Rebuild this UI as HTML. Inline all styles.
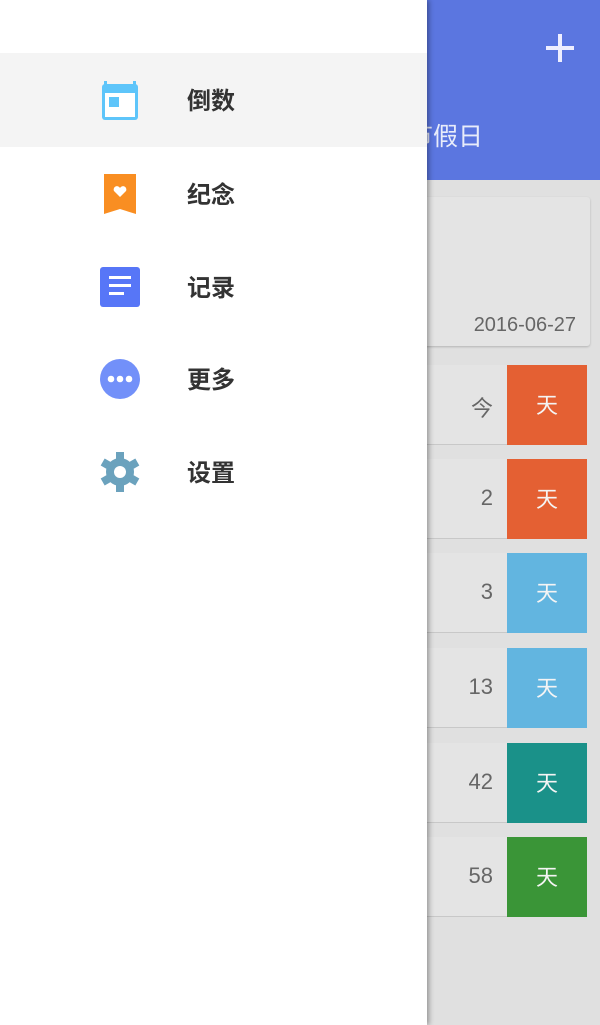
<!DOCTYPE html>
<html><head><meta charset="utf-8"><style>
*{margin:0;padding:0;box-sizing:border-box}
body{width:600px;height:1025px;overflow:hidden;position:relative;background:#e0e0e0;font-family:"Liberation Sans","Noto Sans CJK SC",sans-serif}
.hdr{position:absolute;left:0;top:0;width:600px;height:180px;background:#5b76e0}
.plus{position:absolute;left:546px;top:34px;width:28px;height:28px}
.plus:before{content:"";position:absolute;left:12px;top:0;width:4px;height:28px;background:#eef}
.plus:after{content:"";position:absolute;left:0;top:12px;width:28px;height:4px;background:#eef}
.htitle{position:absolute;left:408px;top:117px;color:#e8ecfa;font-size:25px}
.card{position:absolute;left:380px;top:197px;width:210px;height:149px;background:#e4e4e4;border-radius:3px;box-shadow:0 1px 2px rgba(0,0,0,.2)}
.card span{position:absolute;right:14px;bottom:9px;font-size:20px;color:#666}
.row{position:absolute;left:380px;width:207px;height:80px;background:#e4e4e4;border-bottom:1px solid #c8c8c8}
.row .n{position:absolute;right:94px;top:26px;font-size:22px;color:#666}
.row .b{position:absolute;right:0;top:0;width:80px;height:80px;color:#f4f4f4;font-size:22px;text-align:center;line-height:82px}
.drawer{position:absolute;left:0;top:0;width:427px;height:1025px;background:#fff;box-shadow:2px 0 5px rgba(0,0,0,.35)}
.item{position:absolute;left:0;width:427px;height:94px}
.item.sel{background:#f4f4f4}
.item svg{position:absolute;left:100px;top:27px;width:40px;height:40px}
.item span{position:absolute;left:187px;top:28px;font-size:24px;color:#333;font-weight:bold}
</style></head><body>
<div class="hdr"><div class="plus"></div><div class="htitle">节假日</div></div>
<div class="card"><span>2016-06-27</span></div>
<div class="row" style="top:365px"><div class="n">今</div><div class="b" style="background:#e46033">天</div></div>
<div class="row" style="top:459px"><div class="n">2</div><div class="b" style="background:#e46033">天</div></div>
<div class="row" style="top:553px"><div class="n">3</div><div class="b" style="background:#62b5e0">天</div></div>
<div class="row" style="top:648px"><div class="n">13</div><div class="b" style="background:#62b5e0">天</div></div>
<div class="row" style="top:743px"><div class="n">42</div><div class="b" style="background:#1a9189">天</div></div>
<div class="row" style="top:837px"><div class="n">58</div><div class="b" style="background:#3a9537">天</div></div>
<div class="drawer">
<div class="item sel" style="top:53px"><svg viewBox="0 0 40 40"><rect x="2" y="4" width="36" height="36" rx="3" fill="#5ec5fa"/><rect x="4" y="1" width="3" height="6" fill="#5ec5fa"/><rect x="33" y="1" width="3" height="6" fill="#5ec5fa"/><rect x="5" y="13" width="30" height="24" fill="#fff"/><rect x="9" y="17" width="10" height="10" fill="#5ec5fa"/></svg><span>倒数</span></div>
<div class="item" style="top:147px"><svg viewBox="0 0 40 40"><path d="M4 0h32v40l-16-5-16 5z" fill="#f98e22"/><path d="M20 23l-6-6a3.3 3.3 0 0 1 6-3a3.3 3.3 0 0 1 6 3z" fill="#fff"/></svg><span>纪念</span></div>
<div class="item" style="top:240px"><svg viewBox="0 0 40 40"><rect x="0" y="0" width="40" height="40" rx="3" fill="#5776f7"/><rect x="9" y="9" width="22" height="3" fill="#fff"/><rect x="9" y="17" width="22" height="3" fill="#fff"/><rect x="9" y="25" width="15" height="3" fill="#fff"/></svg><span>记录</span></div>
<div class="item" style="top:332px"><svg viewBox="0 0 40 40"><circle cx="20" cy="20" r="20" fill="#7290f9"/><circle cx="11" cy="20" r="3.3" fill="#fff"/><circle cx="20" cy="20" r="3.3" fill="#fff"/><circle cx="29" cy="20" r="3.3" fill="#fff"/></svg><span>更多</span></div>
<div class="item" style="top:425px"><svg viewBox="0 0 40 40"><g fill="#6ba2bd"><circle cx="20" cy="20" r="14"/><g id="t"><rect x="16" y="0" width="8" height="9"/><rect x="16" y="31" width="8" height="9"/></g><use href="#t" transform="rotate(60 20 20)"/><use href="#t" transform="rotate(120 20 20)"/></g><circle cx="20" cy="20" r="6" fill="#fff"/></svg><span>设置</span></div>
</div>
</body></html>
